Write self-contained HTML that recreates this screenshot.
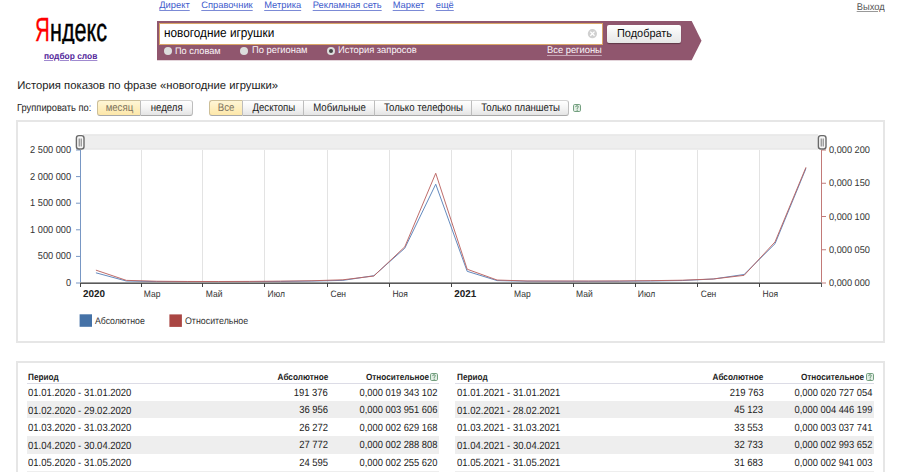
<!DOCTYPE html>
<html><head><meta charset="utf-8"><title>Wordstat</title>
<style>
html,body{margin:0;padding:0;width:900px;height:472px;overflow:hidden;background:#fff;font-family:"Liberation Sans",sans-serif;text-rendering:geometricPrecision;}
.t{position:absolute;white-space:nowrap;}
.r{position:absolute;}
</style></head><body>
<div class="t" style="left:159.30px;top:1.09px;font-size:9.350px;line-height:9.350px;color:#3f5ccc;text-decoration:underline;text-underline-offset:2px;text-decoration-thickness:1px;text-decoration-color:#7b8ad6;">Директ</div>
<div class="t" style="left:201.30px;top:1.09px;font-size:9.350px;line-height:9.350px;color:#3f5ccc;text-decoration:underline;text-underline-offset:2px;text-decoration-thickness:1px;text-decoration-color:#7b8ad6;">Справочник</div>
<div class="t" style="left:264.20px;top:1.09px;font-size:9.350px;line-height:9.350px;color:#3f5ccc;text-decoration:underline;text-underline-offset:2px;text-decoration-thickness:1px;text-decoration-color:#7b8ad6;">Метрика</div>
<div class="t" style="left:312.70px;top:1.09px;font-size:9.350px;line-height:9.350px;color:#3f5ccc;text-decoration:underline;text-underline-offset:2px;text-decoration-thickness:1px;text-decoration-color:#7b8ad6;">Рекламная сеть</div>
<div class="t" style="left:392.70px;top:1.09px;font-size:9.350px;line-height:9.350px;color:#3f5ccc;text-decoration:underline;text-underline-offset:2px;text-decoration-thickness:1px;text-decoration-color:#7b8ad6;">Маркет</div>
<div class="t" style="left:435.70px;top:1.09px;font-size:9.350px;line-height:9.350px;color:#3f5ccc;text-decoration:underline;text-underline-offset:2px;text-decoration-thickness:1px;text-decoration-color:#7b8ad6;">ещё</div>
<div class="t" style="right:15.70px;top:3.01px;font-size:9.911px;line-height:9.911px;color:#555;text-align:right;transform:scaleX(0.9434);transform-origin:100% 0;text-decoration:underline;text-underline-offset:1.3px;text-decoration-color:#999;">Выход</div>
<div class="r" style="left:30px;top:10px;width:80px;height:34px;overflow:hidden"><div class="t" style="left:5.30px;top:3.64px;font-size:33.5px;line-height:33.5px;transform:scaleX(0.61);transform-origin:0 0;color:#f00;-webkit-text-stroke:0.3px #f00">Я</div><div class="t" style="left:19.60px;top:3.91px;font-size:32px;line-height:32px;transform:scaleX(0.675);transform-origin:0 0;color:#000;-webkit-text-stroke:0.45px">ндекс</div></div>
<div class="t" style="left:43.60px;top:52.13px;font-size:8.820px;line-height:8.820px;color:#52259a;transform:scaleX(0.9524);transform-origin:0 0;font-weight:bold;text-decoration:underline;text-underline-offset:1.2px;text-decoration-color:#a08ad0;">подбор слов</div>
<svg class="r" style="left:0;top:0" width="900" height="80"><polygon points="157,21 691.7,21 701.5,40.7 691.7,60.3 157,60.3" fill="#90566e"/></svg>
<div class="r" style="left:158.7px;top:23.3px;width:444.09999999999997px;height:21.400000000000002px;background:#fff;border:1.3px solid #d9a566;box-sizing:border-box;"></div>
<div class="t" style="left:163.80px;top:26.01px;font-size:12.980px;line-height:12.980px;color:#000;transform:scaleX(0.9091);transform-origin:0 0;">новогодние игрушки</div>
<svg class="r" style="left:587px;top:29px" width="11" height="11"><circle cx="5.4" cy="4.7" r="4.6" fill="#d0d0d0"/><path d="M3.3 2.6 L7.5 6.8 M7.5 2.6 L3.3 6.8" stroke="#fff" stroke-width="1.3"/></svg>
<div class="r" style="left:607.1px;top:25px;width:73.79999999999995px;height:17.9px;background:linear-gradient(#fff,#e6e6e6);border-radius:2px;box-shadow:0 1px 1px rgba(0,0,0,.35);"></div>
<div class="t" style="left:616.90px;top:28.67px;font-size:11.498px;line-height:11.498px;color:#111;transform:scaleX(0.9524);transform-origin:0 0;">Подобрать</div>
<div class="r" style="left:163.9px;top:46.7px;width:8px;height:8px;border-radius:50%;background:#ddd;"></div>
<div class="r" style="left:240.2px;top:46.7px;width:8px;height:8px;border-radius:50%;background:#ddd;"></div>
<div class="r" style="left:326.7px;top:46.7px;width:8px;height:8px;border-radius:50%;background:#ddd;"></div>
<div class="r" style="left:328.7px;top:48.7px;width:4px;height:4px;border-radius:50%;background:#444;"></div>
<div class="t" style="left:175.30px;top:46.50px;font-size:9.568px;line-height:9.568px;color:#fbf4f8;transform:scaleX(0.9615);transform-origin:0 0;">По словам</div>
<div class="t" style="left:251.90px;top:46.37px;font-size:9.724px;line-height:9.724px;color:#fbf4f8;transform:scaleX(0.9615);transform-origin:0 0;">По регионам</div>
<div class="t" style="left:338.00px;top:46.37px;font-size:9.724px;line-height:9.724px;color:#fbf4f8;transform:scaleX(0.9615);transform-origin:0 0;">История запросов</div>
<div class="t" style="left:547.20px;top:46.37px;font-size:9.724px;line-height:9.724px;color:#fbf4f8;transform:scaleX(0.9615);transform-origin:0 0;text-decoration:underline;text-underline-offset:1.5px;text-decoration-color:#c8a8b8;">Все регионы</div>
<div class="t" style="left:17.20px;top:80.74px;font-size:11.290px;line-height:11.290px;color:#222;">История показов по фразе «новогодние игрушки»</div>
<div class="t" style="left:17.20px;top:104.29px;font-size:10.285px;line-height:10.285px;color:#222;transform:scaleX(0.9091);transform-origin:0 0;">Группировать по:</div>
<div class="r" style="left:96.5px;top:100.1px;width:44.80000000000001px;height:15.800000000000011px;background:linear-gradient(#fff6d6,#fde7a9);border-top:1px solid #cdbf98;border-bottom:1px solid #a9a9a9;border-right:1px solid #bdbdbd;border-left:1px solid #cdbf98;box-sizing:border-box;border-top-left-radius:3px;border-bottom-left-radius:3px;"></div>
<div class="t" style="left:96.5px;width:44.80000000000001px;top:102.59px;font-size:11px;line-height:11px;color:#7d735f;text-align:center;transform:scaleX(0.875);transform-origin:50% 0">месяц</div>
<div class="r" style="left:141.3px;top:100.1px;width:51.39999999999998px;height:15.800000000000011px;background:linear-gradient(#ffffff,#f4f4f4 50%,#e4e4e4);border-top:1px solid #d4d4d4;border-bottom:1px solid #a9a9a9;border-right:1px solid #bdbdbd;border-left:0;box-sizing:border-box;border-top-right-radius:3px;border-bottom-right-radius:3px;"></div>
<div class="t" style="left:141.3px;width:51.39999999999998px;top:102.59px;font-size:11px;line-height:11px;color:#1a1a1a;text-align:center;transform:scaleX(0.875);transform-origin:50% 0">неделя</div>
<div class="r" style="left:208.5px;top:100.1px;width:34.19999999999999px;height:15.800000000000011px;background:linear-gradient(#fff6d6,#fde7a9);border-top:1px solid #cdbf98;border-bottom:1px solid #a9a9a9;border-right:1px solid #bdbdbd;border-left:1px solid #cdbf98;box-sizing:border-box;border-top-left-radius:3px;border-bottom-left-radius:3px;"></div>
<div class="t" style="left:208.5px;width:34.19999999999999px;top:102.59px;font-size:11px;line-height:11px;color:#7d735f;text-align:center;transform:scaleX(0.875);transform-origin:50% 0">Все</div>
<div class="r" style="left:242.7px;top:100.1px;width:61.69999999999999px;height:15.800000000000011px;background:linear-gradient(#ffffff,#f4f4f4 50%,#e4e4e4);border-top:1px solid #d4d4d4;border-bottom:1px solid #a9a9a9;border-right:1px solid #bdbdbd;border-left:0;box-sizing:border-box;"></div>
<div class="t" style="left:242.7px;width:61.69999999999999px;top:102.59px;font-size:11px;line-height:11px;color:#1a1a1a;text-align:center;transform:scaleX(0.875);transform-origin:50% 0">Десктопы</div>
<div class="r" style="left:304.4px;top:100.1px;width:71.0px;height:15.800000000000011px;background:linear-gradient(#ffffff,#f4f4f4 50%,#e4e4e4);border-top:1px solid #d4d4d4;border-bottom:1px solid #a9a9a9;border-right:1px solid #bdbdbd;border-left:0;box-sizing:border-box;"></div>
<div class="t" style="left:304.4px;width:71.0px;top:102.59px;font-size:11px;line-height:11px;color:#1a1a1a;text-align:center;transform:scaleX(0.875);transform-origin:50% 0">Мобильные</div>
<div class="r" style="left:375.4px;top:100.1px;width:97.0px;height:15.800000000000011px;background:linear-gradient(#ffffff,#f4f4f4 50%,#e4e4e4);border-top:1px solid #d4d4d4;border-bottom:1px solid #a9a9a9;border-right:1px solid #bdbdbd;border-left:0;box-sizing:border-box;"></div>
<div class="t" style="left:375.4px;width:97.0px;top:102.59px;font-size:11px;line-height:11px;color:#1a1a1a;text-align:center;transform:scaleX(0.875);transform-origin:50% 0">Только телефоны</div>
<div class="r" style="left:472.4px;top:100.1px;width:97.10000000000002px;height:15.800000000000011px;background:linear-gradient(#ffffff,#f4f4f4 50%,#e4e4e4);border-top:1px solid #d4d4d4;border-bottom:1px solid #a9a9a9;border-right:1px solid #bdbdbd;border-left:0;box-sizing:border-box;border-top-right-radius:3px;border-bottom-right-radius:3px;"></div>
<div class="t" style="left:472.4px;width:97.10000000000002px;top:102.59px;font-size:11px;line-height:11px;color:#1a1a1a;text-align:center;transform:scaleX(0.875);transform-origin:50% 0">Только планшеты</div>
<svg class="r" style="left:573px;top:104px" width="8" height="8" viewBox="0 0 8 8"><rect x="0.5" y="0.5" width="7" height="7" rx="1.2" fill="#e4efe6" stroke="#74a080" stroke-width="1"/><path d="M2.7 3.1 Q2.7 1.7 4 1.7 Q5.3 1.7 5.3 2.9 Q5.3 3.7 4.2 4.2 L4.2 5.1" fill="none" stroke="#6a9676" stroke-width="1"/><rect x="3.6" y="5.7" width="1.2" height="1.1" fill="#6a9676"/></svg>
<div class="r" style="left:16px;top:120px;width:869px;height:223px;border:2px solid #e6e6e6;box-sizing:border-box;"></div>
<div class="r" style="left:16px;top:361px;width:869px;height:119px;border:2px solid #e6e6e6;box-sizing:border-box;"></div>
<svg class="r" style="left:0;top:0" width="900" height="472"><rect x="83" y="134.3" width="735" height="15.2" fill="#eeeeee"/><rect x="83" y="134.5" width="735" height="1" fill="#e3e3e3"/><rect x="83" y="148.5" width="735" height="1" fill="#e3e3e3"/><line x1="141.5" y1="150" x2="141.5" y2="283" stroke="#e3e3e3" stroke-width="1"/><line x1="202.5" y1="150" x2="202.5" y2="283" stroke="#e3e3e3" stroke-width="1"/><line x1="264.5" y1="150" x2="264.5" y2="283" stroke="#e3e3e3" stroke-width="1"/><line x1="327.5" y1="150" x2="327.5" y2="283" stroke="#e3e3e3" stroke-width="1"/><line x1="389.5" y1="150" x2="389.5" y2="283" stroke="#e3e3e3" stroke-width="1"/><line x1="451.5" y1="150" x2="451.5" y2="283" stroke="#e3e3e3" stroke-width="1"/><line x1="511.5" y1="150" x2="511.5" y2="283" stroke="#e3e3e3" stroke-width="1"/><line x1="573.5" y1="150" x2="573.5" y2="283" stroke="#e3e3e3" stroke-width="1"/><line x1="635.5" y1="150" x2="635.5" y2="283" stroke="#e3e3e3" stroke-width="1"/><line x1="697.5" y1="150" x2="697.5" y2="283" stroke="#e3e3e3" stroke-width="1"/><line x1="759.5" y1="150" x2="759.5" y2="283" stroke="#e3e3e3" stroke-width="1"/><polyline points="95.92,272.82 126.35,281.03 156.78,281.60 187.72,281.52 218.66,281.69 249.60,281.64 280.54,281.46 311.98,281.08 342.92,280.39 373.86,275.71 404.80,248.21 435.73,184.21 467.18,271.31 497.10,280.60 527.03,281.21 557.97,281.26 588.90,281.31 619.84,281.24 650.78,280.98 682.22,280.55 713.16,279.01 744.10,274.49 775.04,243.69 805.98,168.41" fill="none" stroke="#5b84bb" stroke-width="0.95" stroke-linejoin="round"/><polyline points="95.92,270.14 126.35,280.37 156.78,281.25 187.72,281.48 218.66,281.50 249.60,281.40 280.54,281.14 311.98,280.74 342.92,279.81 373.86,276.02 404.80,246.82 435.73,173.28 467.18,269.22 497.10,280.04 527.03,280.98 557.97,281.01 588.90,281.04 619.84,280.94 650.78,280.67 682.22,280.21 713.16,279.01 744.10,275.35 775.04,241.90 805.98,167.29" fill="none" stroke="#bb6462" stroke-width="0.95" stroke-linejoin="round"/><line x1="80.5" y1="150" x2="80.5" y2="283" stroke="#7897c4" stroke-width="1"/><line x1="821.5" y1="150" x2="821.5" y2="283" stroke="#c27a78" stroke-width="1"/><line x1="80" y1="282.5" x2="822" y2="282.5" stroke="#9a9a9a" stroke-width="1"/><line x1="80" y1="283.5" x2="822" y2="283.5" stroke="#5a5a5a" stroke-width="1"/><line x1="80.5" y1="283" x2="80.5" y2="287" stroke="#444" stroke-width="1"/><line x1="141.5" y1="283" x2="141.5" y2="287" stroke="#444" stroke-width="1"/><line x1="202.5" y1="283" x2="202.5" y2="287" stroke="#444" stroke-width="1"/><line x1="264.5" y1="283" x2="264.5" y2="287" stroke="#444" stroke-width="1"/><line x1="327.5" y1="283" x2="327.5" y2="287" stroke="#444" stroke-width="1"/><line x1="389.5" y1="283" x2="389.5" y2="287" stroke="#444" stroke-width="1"/><line x1="451.5" y1="283" x2="451.5" y2="287" stroke="#444" stroke-width="1"/><line x1="511.5" y1="283" x2="511.5" y2="287" stroke="#444" stroke-width="1"/><line x1="573.5" y1="283" x2="573.5" y2="287" stroke="#444" stroke-width="1"/><line x1="635.5" y1="283" x2="635.5" y2="287" stroke="#444" stroke-width="1"/><line x1="697.5" y1="283" x2="697.5" y2="287" stroke="#444" stroke-width="1"/><line x1="759.5" y1="283" x2="759.5" y2="287" stroke="#444" stroke-width="1"/><line x1="821.5" y1="283" x2="821.5" y2="287" stroke="#555" stroke-width="1"/><line x1="76" y1="283.00" x2="80" y2="283.00" stroke="#7897c4" stroke-width="1"/><text transform="translate(71.00,286.00) scale(0.9091,1)" text-anchor="end" font-family="Liberation Sans" font-size="10.120" font-weight="normal" fill="#333">0</text><line x1="76" y1="256.40" x2="80" y2="256.40" stroke="#7897c4" stroke-width="1"/><text transform="translate(71.00,259.40) scale(0.9091,1)" text-anchor="end" font-family="Liberation Sans" font-size="10.120" font-weight="normal" fill="#333">500 000</text><line x1="76" y1="229.80" x2="80" y2="229.80" stroke="#7897c4" stroke-width="1"/><text transform="translate(71.00,232.80) scale(0.9091,1)" text-anchor="end" font-family="Liberation Sans" font-size="10.120" font-weight="normal" fill="#333">1 000 000</text><line x1="76" y1="203.20" x2="80" y2="203.20" stroke="#7897c4" stroke-width="1"/><text transform="translate(71.00,206.20) scale(0.9091,1)" text-anchor="end" font-family="Liberation Sans" font-size="10.120" font-weight="normal" fill="#333">1 500 000</text><line x1="76" y1="176.60" x2="80" y2="176.60" stroke="#7897c4" stroke-width="1"/><text transform="translate(71.00,179.60) scale(0.9091,1)" text-anchor="end" font-family="Liberation Sans" font-size="10.120" font-weight="normal" fill="#333">2 000 000</text><line x1="76" y1="150.00" x2="80" y2="150.00" stroke="#7897c4" stroke-width="1"/><text transform="translate(71.00,153.00) scale(0.9091,1)" text-anchor="end" font-family="Liberation Sans" font-size="10.120" font-weight="normal" fill="#333">2 500 000</text><line x1="822" y1="283.00" x2="826" y2="283.00" stroke="#c27a78" stroke-width="1"/><text transform="translate(829.00,286.00) scale(0.9434,1)" text-anchor="start" font-family="Liberation Sans" font-size="9.752" font-weight="normal" fill="#333">0,000 000</text><line x1="822" y1="249.75" x2="826" y2="249.75" stroke="#c27a78" stroke-width="1"/><text transform="translate(829.00,252.75) scale(0.9434,1)" text-anchor="start" font-family="Liberation Sans" font-size="9.752" font-weight="normal" fill="#333">0,000 050</text><line x1="822" y1="216.50" x2="826" y2="216.50" stroke="#c27a78" stroke-width="1"/><text transform="translate(829.00,219.50) scale(0.9434,1)" text-anchor="start" font-family="Liberation Sans" font-size="9.752" font-weight="normal" fill="#333">0,000 100</text><line x1="822" y1="183.25" x2="826" y2="183.25" stroke="#c27a78" stroke-width="1"/><text transform="translate(829.00,186.25) scale(0.9434,1)" text-anchor="start" font-family="Liberation Sans" font-size="9.752" font-weight="normal" fill="#333">0,000 150</text><line x1="822" y1="150.00" x2="826" y2="150.00" stroke="#c27a78" stroke-width="1"/><text transform="translate(829.00,153.00) scale(0.9434,1)" text-anchor="start" font-family="Liberation Sans" font-size="9.752" font-weight="normal" fill="#333">0,000 200</text><text transform="translate(83.00,297.30) scale(1.0000,1)" text-anchor="start" font-family="Liberation Sans" font-size="9.900" font-weight="bold" fill="#222">2020</text><text transform="translate(143.86,297.30) scale(0.9091,1)" text-anchor="start" font-family="Liberation Sans" font-size="9.350" font-weight="normal" fill="#333">Мар</text><text transform="translate(205.74,297.30) scale(0.9091,1)" text-anchor="start" font-family="Liberation Sans" font-size="9.350" font-weight="normal" fill="#333">Май</text><text transform="translate(267.61,297.30) scale(0.9091,1)" text-anchor="start" font-family="Liberation Sans" font-size="9.350" font-weight="normal" fill="#333">Июл</text><text transform="translate(330.50,297.30) scale(0.9091,1)" text-anchor="start" font-family="Liberation Sans" font-size="9.350" font-weight="normal" fill="#333">Сен</text><text transform="translate(392.38,297.30) scale(0.9091,1)" text-anchor="start" font-family="Liberation Sans" font-size="9.350" font-weight="normal" fill="#333">Ноя</text><text transform="translate(454.26,297.30) scale(1.0000,1)" text-anchor="start" font-family="Liberation Sans" font-size="9.900" font-weight="bold" fill="#222">2021</text><text transform="translate(514.10,297.30) scale(0.9091,1)" text-anchor="start" font-family="Liberation Sans" font-size="9.350" font-weight="normal" fill="#333">Мар</text><text transform="translate(575.98,297.30) scale(0.9091,1)" text-anchor="start" font-family="Liberation Sans" font-size="9.350" font-weight="normal" fill="#333">Май</text><text transform="translate(637.86,297.30) scale(0.9091,1)" text-anchor="start" font-family="Liberation Sans" font-size="9.350" font-weight="normal" fill="#333">Июл</text><text transform="translate(700.75,297.30) scale(0.9091,1)" text-anchor="start" font-family="Liberation Sans" font-size="9.350" font-weight="normal" fill="#333">Сен</text><text transform="translate(762.62,297.30) scale(0.9091,1)" text-anchor="start" font-family="Liberation Sans" font-size="9.350" font-weight="normal" fill="#333">Ноя</text><rect x="76.39999999999999" y="135.6" width="7.6" height="13.4" rx="2.5" fill="#f7f7f7" stroke="#6a6a6a" stroke-width="1.4"/><line x1="79.19999999999999" y1="138.5" x2="79.19999999999999" y2="146.5" stroke="#555" stroke-width="0.8"/><line x1="81.19999999999999" y1="138.5" x2="81.19999999999999" y2="146.5" stroke="#555" stroke-width="0.8"/><rect x="818.4" y="135.6" width="7.6" height="13.4" rx="2.5" fill="#f7f7f7" stroke="#6a6a6a" stroke-width="1.4"/><line x1="821.2" y1="138.5" x2="821.2" y2="146.5" stroke="#555" stroke-width="0.8"/><line x1="823.2" y1="138.5" x2="823.2" y2="146.5" stroke="#555" stroke-width="0.8"/><rect x="79.6" y="314.3" width="12.4" height="12.5" fill="#4572a7"/><text transform="translate(94.90,323.80) scale(0.9091,1)" text-anchor="start" font-family="Liberation Sans" font-size="9.625" font-weight="normal" fill="#333">Абсолютное</text><rect x="169.4" y="314.4" width="12.5" height="12.5" fill="#aa4643"/><text transform="translate(185.00,323.90) scale(0.9091,1)" text-anchor="start" font-family="Liberation Sans" font-size="9.735" font-weight="normal" fill="#333">Относительное</text></svg>
<div class="t" style="left:28.40px;top:372.60px;font-size:9.102px;line-height:9.102px;color:#222;transform:scaleX(0.9009);transform-origin:0 0;font-weight:bold;">Период</div>
<div class="t" style="right:572.20px;top:372.60px;font-size:9.102px;line-height:9.102px;color:#222;text-align:right;transform:scaleX(0.9009);transform-origin:100% 0;font-weight:bold;">Абсолютное</div>
<div class="t" style="right:470.90px;top:372.60px;font-size:9.102px;line-height:9.102px;color:#222;text-align:right;transform:scaleX(0.9009);transform-origin:100% 0;font-weight:bold;">Относительное</div>
<svg class="r" style="left:430.3px;top:373px" width="8" height="8" viewBox="0 0 8 8"><rect x="0.5" y="0.5" width="7" height="7" rx="1.2" fill="#e4efe6" stroke="#74a080" stroke-width="1"/><path d="M2.7 3.1 Q2.7 1.7 4 1.7 Q5.3 1.7 5.3 2.9 Q5.3 3.7 4.2 4.2 L4.2 5.1" fill="none" stroke="#6a9676" stroke-width="1"/><rect x="3.6" y="5.7" width="1.2" height="1.1" fill="#6a9676"/></svg>
<div class="r" style="left:27px;top:383.1px;width:412px;height:1.0px;background:#dcdce6;"></div>
<div class="t" style="left:28.40px;top:388.27px;font-size:10.545px;line-height:10.545px;color:#222;transform:scaleX(0.9009);transform-origin:0 0;">01.01.2020 - 31.01.2020</div>
<div class="t" style="right:572.20px;top:388.92px;font-size:10.489px;line-height:10.489px;color:#222;text-align:right;transform:scaleX(0.9009);transform-origin:100% 0;">191 376</div>
<div class="t" style="right:462.90px;top:389.01px;font-size:10.379px;line-height:10.379px;color:#222;text-align:right;transform:scaleX(0.9009);transform-origin:100% 0;">0,000 019 343 102</div>
<div class="r" style="left:27px;top:401.4px;width:412px;height:17.100000000000023px;background:#eeeeee;"></div>
<div class="t" style="left:28.40px;top:405.75px;font-size:10.545px;line-height:10.545px;color:#222;transform:scaleX(0.9009);transform-origin:0 0;">01.02.2020 - 29.02.2020</div>
<div class="t" style="right:572.20px;top:406.40px;font-size:10.489px;line-height:10.489px;color:#222;text-align:right;transform:scaleX(0.9009);transform-origin:100% 0;">36 956</div>
<div class="t" style="right:462.90px;top:406.49px;font-size:10.379px;line-height:10.379px;color:#222;text-align:right;transform:scaleX(0.9009);transform-origin:100% 0;">0,000 003 951 606</div>
<div class="t" style="left:28.40px;top:423.23px;font-size:10.545px;line-height:10.545px;color:#222;transform:scaleX(0.9009);transform-origin:0 0;">01.03.2020 - 31.03.2020</div>
<div class="t" style="right:572.20px;top:423.88px;font-size:10.489px;line-height:10.489px;color:#222;text-align:right;transform:scaleX(0.9009);transform-origin:100% 0;">26 272</div>
<div class="t" style="right:462.90px;top:423.97px;font-size:10.379px;line-height:10.379px;color:#222;text-align:right;transform:scaleX(0.9009);transform-origin:100% 0;">0,000 002 629 168</div>
<div class="r" style="left:27px;top:436.4px;width:412px;height:17.200000000000045px;background:#eeeeee;"></div>
<div class="t" style="left:28.40px;top:440.71px;font-size:10.545px;line-height:10.545px;color:#222;transform:scaleX(0.9009);transform-origin:0 0;">01.04.2020 - 30.04.2020</div>
<div class="t" style="right:572.20px;top:441.36px;font-size:10.489px;line-height:10.489px;color:#222;text-align:right;transform:scaleX(0.9009);transform-origin:100% 0;">27 772</div>
<div class="t" style="right:462.90px;top:441.45px;font-size:10.379px;line-height:10.379px;color:#222;text-align:right;transform:scaleX(0.9009);transform-origin:100% 0;">0,000 002 288 808</div>
<div class="t" style="left:28.40px;top:458.19px;font-size:10.545px;line-height:10.545px;color:#222;transform:scaleX(0.9009);transform-origin:0 0;">01.05.2020 - 31.05.2020</div>
<div class="t" style="right:572.20px;top:458.84px;font-size:10.489px;line-height:10.489px;color:#222;text-align:right;transform:scaleX(0.9009);transform-origin:100% 0;">24 595</div>
<div class="t" style="right:462.90px;top:458.93px;font-size:10.379px;line-height:10.379px;color:#222;text-align:right;transform:scaleX(0.9009);transform-origin:100% 0;">0,000 002 255 620</div>
<div class="r" style="left:27px;top:470.9px;width:412px;height:17.100000000000023px;background:#eeeeee;"></div>
<div class="t" style="left:28.40px;top:475.67px;font-size:10.545px;line-height:10.545px;color:#222;transform:scaleX(0.9009);transform-origin:0 0;">01.06.2020 - 30.06.2020</div>
<div class="t" style="left:456.50px;top:372.60px;font-size:9.102px;line-height:9.102px;color:#222;transform:scaleX(0.9009);transform-origin:0 0;font-weight:bold;">Период</div>
<div class="t" style="right:136.50px;top:372.60px;font-size:9.102px;line-height:9.102px;color:#222;text-align:right;transform:scaleX(0.9009);transform-origin:100% 0;font-weight:bold;">Абсолютное</div>
<div class="t" style="right:35.50px;top:372.60px;font-size:9.102px;line-height:9.102px;color:#222;text-align:right;transform:scaleX(0.9009);transform-origin:100% 0;font-weight:bold;">Относительное</div>
<svg class="r" style="left:865.7px;top:373px" width="8" height="8" viewBox="0 0 8 8"><rect x="0.5" y="0.5" width="7" height="7" rx="1.2" fill="#e4efe6" stroke="#74a080" stroke-width="1"/><path d="M2.7 3.1 Q2.7 1.7 4 1.7 Q5.3 1.7 5.3 2.9 Q5.3 3.7 4.2 4.2 L4.2 5.1" fill="none" stroke="#6a9676" stroke-width="1"/><rect x="3.6" y="5.7" width="1.2" height="1.1" fill="#6a9676"/></svg>
<div class="r" style="left:455px;top:383.1px;width:419.29999999999995px;height:1.0px;background:#dcdce6;"></div>
<div class="t" style="left:456.50px;top:388.27px;font-size:10.545px;line-height:10.545px;color:#222;transform:scaleX(0.9009);transform-origin:0 0;">01.01.2021 - 31.01.2021</div>
<div class="t" style="right:136.50px;top:388.92px;font-size:10.489px;line-height:10.489px;color:#222;text-align:right;transform:scaleX(0.9009);transform-origin:100% 0;">219 763</div>
<div class="t" style="right:27.50px;top:389.01px;font-size:10.379px;line-height:10.379px;color:#222;text-align:right;transform:scaleX(0.9009);transform-origin:100% 0;">0,000 020 727 054</div>
<div class="r" style="left:455px;top:401.4px;width:419.29999999999995px;height:17.100000000000023px;background:#eeeeee;"></div>
<div class="t" style="left:456.50px;top:405.75px;font-size:10.545px;line-height:10.545px;color:#222;transform:scaleX(0.9009);transform-origin:0 0;">01.02.2021 - 28.02.2021</div>
<div class="t" style="right:136.50px;top:406.40px;font-size:10.489px;line-height:10.489px;color:#222;text-align:right;transform:scaleX(0.9009);transform-origin:100% 0;">45 123</div>
<div class="t" style="right:27.50px;top:406.49px;font-size:10.379px;line-height:10.379px;color:#222;text-align:right;transform:scaleX(0.9009);transform-origin:100% 0;">0,000 004 446 199</div>
<div class="t" style="left:456.50px;top:423.23px;font-size:10.545px;line-height:10.545px;color:#222;transform:scaleX(0.9009);transform-origin:0 0;">01.03.2021 - 31.03.2021</div>
<div class="t" style="right:136.50px;top:423.88px;font-size:10.489px;line-height:10.489px;color:#222;text-align:right;transform:scaleX(0.9009);transform-origin:100% 0;">33 553</div>
<div class="t" style="right:27.50px;top:423.97px;font-size:10.379px;line-height:10.379px;color:#222;text-align:right;transform:scaleX(0.9009);transform-origin:100% 0;">0,000 003 037 741</div>
<div class="r" style="left:455px;top:436.4px;width:419.29999999999995px;height:17.200000000000045px;background:#eeeeee;"></div>
<div class="t" style="left:456.50px;top:440.71px;font-size:10.545px;line-height:10.545px;color:#222;transform:scaleX(0.9009);transform-origin:0 0;">01.04.2021 - 30.04.2021</div>
<div class="t" style="right:136.50px;top:441.36px;font-size:10.489px;line-height:10.489px;color:#222;text-align:right;transform:scaleX(0.9009);transform-origin:100% 0;">32 733</div>
<div class="t" style="right:27.50px;top:441.45px;font-size:10.379px;line-height:10.379px;color:#222;text-align:right;transform:scaleX(0.9009);transform-origin:100% 0;">0,000 002 993 652</div>
<div class="t" style="left:456.50px;top:458.19px;font-size:10.545px;line-height:10.545px;color:#222;transform:scaleX(0.9009);transform-origin:0 0;">01.05.2021 - 31.05.2021</div>
<div class="t" style="right:136.50px;top:458.84px;font-size:10.489px;line-height:10.489px;color:#222;text-align:right;transform:scaleX(0.9009);transform-origin:100% 0;">31 683</div>
<div class="t" style="right:27.50px;top:458.93px;font-size:10.379px;line-height:10.379px;color:#222;text-align:right;transform:scaleX(0.9009);transform-origin:100% 0;">0,000 002 941 003</div>
<div class="r" style="left:455px;top:470.9px;width:419.29999999999995px;height:17.100000000000023px;background:#eeeeee;"></div>
<div class="t" style="left:456.50px;top:475.67px;font-size:10.545px;line-height:10.545px;color:#222;transform:scaleX(0.9009);transform-origin:0 0;">01.06.2021 - 30.06.2021</div>
</body></html>
